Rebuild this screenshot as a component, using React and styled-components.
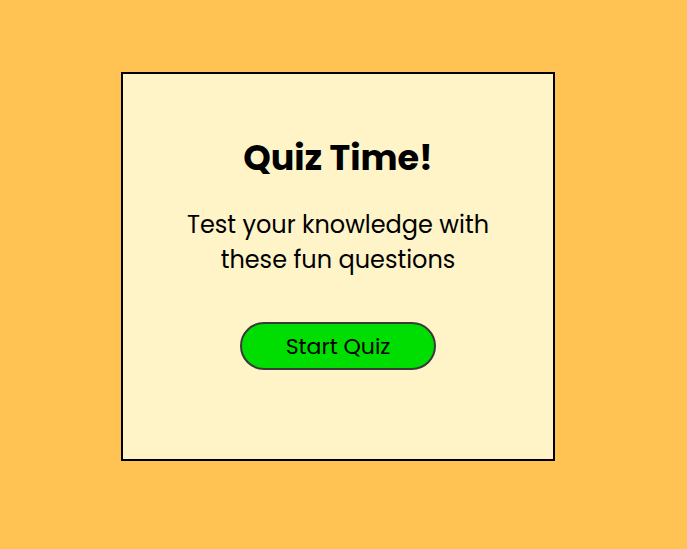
import React from 'react';
import styled, { createGlobalStyle } from 'styled-components';

const GlobalStyle = createGlobalStyle`
  html, body {
    margin: 0;
    padding: 0;
    background-color: #ffc354;
  }
  body {
    font-family: "Poppins", "Open Sans", "DejaVu Sans", sans-serif;
    color: #000;
  }
`;

const Page = styled.div`
  min-height: 549px;
  box-sizing: border-box;
  padding: 72px 132px 0 121px;
  display: flex;
  justify-content: center;
  align-items: flex-start;
`;

const Card = styled.div`
  width: 434px;
  height: 389px;
  box-sizing: border-box;
  border: 2px solid #000;
  background-color: #fff3c8;
  display: flex;
  flex-direction: column;
  align-items: center;
  padding-top: 58px;
`;

const Title = styled.h1`
  margin: 0;
  font-size: 35px;
  font-weight: 700;
  line-height: 52px;
`;

const Subtitle = styled.p`
  margin: 23px 0 0;
  width: 330px;
  text-align: center;
  font-size: 24px;
  line-height: 35px;
`;

const StartButton = styled.button`
  margin-top: 45px;
  width: 196px;
  height: 48px;
  border-radius: 24px;
  border: 2px solid #3a3a3a;
  background-color: #00dd00;
  font-family: inherit;
  font-size: 22px;
  color: #000;
  cursor: pointer;
`;

export default function App() {
  return (
    <>
      <GlobalStyle />
      <Page>
        <Card>
          <Title>Quiz Time!</Title>
          <Subtitle>Test your knowledge with these fun questions</Subtitle>
          <StartButton>Start Quiz</StartButton>
        </Card>
      </Page>
    </>
  );
}
